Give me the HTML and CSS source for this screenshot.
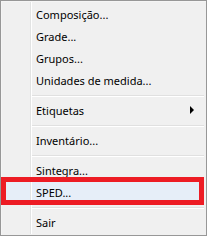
FILE: index.html
```html
<!DOCTYPE html>
<html lang="pt">
<head>
    <meta charset="UTF-8">
    <title>Menu</title>
    <link rel="stylesheet" href="styles.css">
</head>
<body>
    <div class="menu">
        <div class="item">Composição...</div>
        <div class="item">Grade...</div>
        <div class="item">Grupos...</div>
        <div class="item">Unidades de medida...</div>
        <div class="sep"></div>
        <div class="item">Etiquetas <span class="arrow"></span></div>
        <div class="sep"></div>
        <div class="item">Inventário...</div>
        <div class="sep"></div>
        <div class="item">Sintegra...</div>
        <div class="item active">SPED...</div>
        <div class="sep"></div>
        <div class="item">Sair</div>
        <div class="mark"></div>
    </div>
</body>
</html>
```

FILE: styles.css
```css
body {
    margin: 0;
    font-family: "Noto Sans", Arial, sans-serif;
}
.menu {
    position: relative;
    width: 207px;
    height: 236px;
    box-sizing: border-box;
    border: 1px solid #979797;
    padding: 2px 2px;
    background-color: #f0f0f0;
    box-shadow: inset 1px 1px 0 #f5f5f5;
}
.menu::before {
    content: "";
    position: absolute;
    left: 29px;
    top: 1px;
    bottom: 1px;
    width: 1px;
    background-color: #e2e3e3;
    box-shadow: 1px 0 0 #ffffff;
}
.item {
    display: flex;
    align-items: center;
    justify-content: space-between;
    height: 22px;
    padding-left: 33px;
    padding-right: 10px;
    font-size: 11px;
    color: #000;
}
.item.active {
    background-color: #e6eef8;
}
.arrow {
    width: 0;
    height: 0;
    border-top: 4px solid transparent;
    border-bottom: 4px solid transparent;
    border-left: 4px solid #000;
}
.sep {
    height: 8px;
    margin-left: 28px;
    display: flex;
    align-items: center;
}
.sep::after {
    content: "";
    flex: 1;
    height: 1px;
    background-color: #e0e0e0;
    box-shadow: 0 1px 0 #ffffff;
}
.mark {
    position: absolute;
    left: 0;
    top: 176px;
    width: 203px;
    height: 28px;
    box-sizing: border-box;
    border: 5px solid #ed1c24;
}
```
